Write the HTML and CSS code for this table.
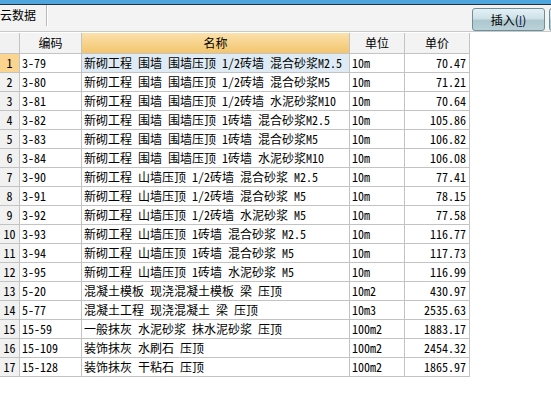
FILE: index.html
```html
<!DOCTYPE html>
<html>
<head>
<meta charset="utf-8">
<link rel="stylesheet" href="styles.css">
</head>
<body>
<div class="strip"></div>
<div class="toolbar">
  <div class="tab">云数据</div>
  <div class="sep"></div>
  <div class="actions">
    <button class="btn">插入(<u>I</u>)</button>
    <button class="btn btn2" aria-label="删除"></button>
  </div>
</div>
<div class="grid">
  <div class="c hd idx"></div><div class="c hd ctr">编码</div><div class="c hd ctr act">名称</div><div class="c hd ctr">单位</div><div class="c hd ctr">单价</div>

  <div class="c idx sel">1</div><div class="c">3-79</div><div class="c name cur">新砌工程 围墙 围墙压顶 1/2砖墙 混合砂浆M2.5</div><div class="c">10m</div><div class="c num">70.47</div>
  <div class="c idx">2</div><div class="c">3-80</div><div class="c name">新砌工程 围墙 围墙压顶 1/2砖墙 混合砂浆M5</div><div class="c">10m</div><div class="c num">71.21</div>
  <div class="c idx">3</div><div class="c">3-81</div><div class="c name">新砌工程 围墙 围墙压顶 1/2砖墙 水泥砂浆M10</div><div class="c">10m</div><div class="c num">70.64</div>
  <div class="c idx">4</div><div class="c">3-82</div><div class="c name">新砌工程 围墙 围墙压顶 1砖墙 混合砂浆M2.5</div><div class="c">10m</div><div class="c num">105.86</div>
  <div class="c idx">5</div><div class="c">3-83</div><div class="c name">新砌工程 围墙 围墙压顶 1砖墙 混合砂浆M5</div><div class="c">10m</div><div class="c num">106.82</div>
  <div class="c idx">6</div><div class="c">3-84</div><div class="c name">新砌工程 围墙 围墙压顶 1砖墙 水泥砂浆M10</div><div class="c">10m</div><div class="c num">106.08</div>
  <div class="c idx">7</div><div class="c">3-90</div><div class="c name">新砌工程 山墙压顶 1/2砖墙 混合砂浆 M2.5</div><div class="c">10m</div><div class="c num">77.41</div>
  <div class="c idx">8</div><div class="c">3-91</div><div class="c name">新砌工程 山墙压顶 1/2砖墙 混合砂浆 M5</div><div class="c">10m</div><div class="c num">78.15</div>
  <div class="c idx">9</div><div class="c">3-92</div><div class="c name">新砌工程 山墙压顶 1/2砖墙 水泥砂浆 M5</div><div class="c">10m</div><div class="c num">77.58</div>
  <div class="c idx">10</div><div class="c">3-93</div><div class="c name">新砌工程 山墙压顶 1砖墙 混合砂浆 M2.5</div><div class="c">10m</div><div class="c num">116.77</div>
  <div class="c idx">11</div><div class="c">3-94</div><div class="c name">新砌工程 山墙压顶 1砖墙 混合砂浆 M5</div><div class="c">10m</div><div class="c num">117.73</div>
  <div class="c idx">12</div><div class="c">3-95</div><div class="c name">新砌工程 山墙压顶 1砖墙 水泥砂浆 M5</div><div class="c">10m</div><div class="c num">116.99</div>
  <div class="c idx">13</div><div class="c">5-20</div><div class="c name">混凝土模板 现浇混凝土模板 梁 压顶</div><div class="c">10m2</div><div class="c num">430.97</div>
  <div class="c idx">14</div><div class="c">5-77</div><div class="c name">混凝土工程 现浇混凝土 梁 压顶</div><div class="c">10m3</div><div class="c num">2535.63</div>
  <div class="c idx">15</div><div class="c">15-59</div><div class="c name">一般抹灰 水泥砂浆 抹水泥砂浆 压顶</div><div class="c">100m2</div><div class="c num">1883.17</div>
  <div class="c idx">16</div><div class="c">15-109</div><div class="c name">装饰抹灰 水刷石 压顶</div><div class="c">100m2</div><div class="c num">2454.32</div>
  <div class="c idx">17</div><div class="c">15-128</div><div class="c name">装饰抹灰 干粘石 压顶</div><div class="c">100m2</div><div class="c num">1865.97</div>
</div>
</body>
</html>
```
FILE: styles.css
```css
html, body {
  margin: 0;
  padding: 0;
  background: #ffffff;
  width: 551px;
  height: 403px;
  overflow: hidden;
  font-family: "Noto Sans Mono CJK SC", "Noto Sans CJK SC", monospace;
  font-size: 12px;
  color: #000;
}
.strip {
  height: 4px;
  background: #4fa6de;
  border-bottom: 1px solid #23313a;
}
.toolbar {
  height: 26px;
  background: #f3f3f3;
  border-bottom: 1px solid #c9c9c9;
  display: flex;
  align-items: flex-start;
  overflow: hidden;
}
.tab {
  flex: none;
  padding: 2px 0 0 0;
  line-height: 16px;
  width: 46px;
}
.sep {
  flex: none;
  width: 1px;
  height: 21px;
  background: #b8b8b8;
  border-right: 1px solid #ffffff;
}
.actions {
  margin-left: auto;
  flex: none;
  width: 79px;
  display: flex;
  gap: 4px;
  overflow: hidden;
}
.btn {
  flex: none;
  margin-top: 3px;
  width: 73px;
  height: 23px;
  border: 1px solid #6f8f98;
  border-radius: 3px;
  background: linear-gradient(#e4f1f5 0%, #cde2e8 45%, #aec8cf 55%, #b9d1d8 100%);
  font-family: "Noto Sans CJK SC", sans-serif;
  font-size: 12px;
  color: #000;
  padding: 0;
  line-height: 20px;
}
.btn u {
  color: #1a2a80;
}
.grid {
  margin-top: 1px;
  display: grid;
  grid-template-columns: 20px 62px 268px 55px 65px;
  grid-auto-rows: 19px;
  grid-template-rows: 21px;
  width: 470px;
}
.c {
  box-sizing: border-box;
  border-right: 1px solid #c3c3c3;
  border-bottom: 1px solid #c3c3c3;
  padding: 0 2px;
  line-height: 18px;
  white-space: nowrap;
  overflow: hidden;
  background: #fff;
}
.hd {
  background: #f3f3f3;
  line-height: 20px;
}
.ctr {
  text-align: center;
}
.act {
  background: linear-gradient(#fbe1ab, #f3c56e);
}
.idx {
  background: #f1f1f1;
  text-align: center;
  padding: 0;
}
.idx.sel {
  background: #fbd58f;
}
.cur {
  background: #deebf4;
}
.num {
  text-align: right;
  padding-right: 3px;
}
```
